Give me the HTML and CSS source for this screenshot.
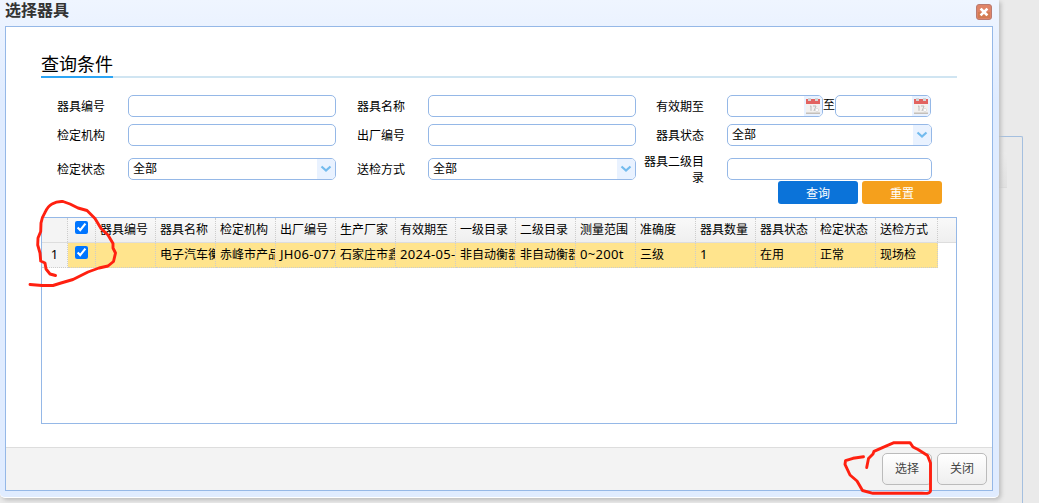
FILE: index.html
```html
<!DOCTYPE html>
<html lang="zh-CN">
<head>
  <meta charset="UTF-8" />
  <title>选择器具</title>
  <link rel="stylesheet" href="styles.css">
</head>
<body>

<div class="page-panel"><div class="page-toolbar"></div></div>

<div class="window">
  <div class="window-header">
    <span>选择器具</span>
    <svg class="close" width="16" height="16" viewBox="0 0 16 16">
      <rect x="0.5" y="0.5" width="15" height="15" rx="2.5" fill="#df8468" stroke="#b97a70"/>
      <rect x="2" y="8" width="12" height="6" fill="#d37b52"/>
      <path d="M5.500 5.500l5 5M10.500 5.500l-5 5" stroke="#fff" stroke-width="2.600" stroke-linecap="square"/>
    </svg>
  </div>

  <div class="window-body">
    <div class="content">
      <div class="section-title"><span>查询条件</span></div>

      <form class="search">
        <label>器具编号</label>
        <input type="text">
        <label>器具名称</label>
        <input type="text">
        <label>有效期至</label>
        <div class="dates">
          <div class="box date"><span class="addon"><svg width="16" height="18" viewBox="0 0 16 18"><path d="M1 2h14v14.5H1z" fill="#f3f1ef"/><path d="M1 15.500h14v1.500H1z" fill="#c4bfba"/><path d="M1 2h14v5H1z" fill="#e26360"/><path d="M3 1h3v3H3zM10 1h3v3h-3z" fill="#d5d5d5"/><path d="M5 9.500l1-.7v5M8 9h3l-2 5" fill="none" stroke="#bbb"/><circle cx="12" cy="13" r="1.600" fill="#fff" stroke="#d6d6d6" stroke-width=".7"/></svg></span></div>
          <span class="to">至</span>
          <div class="box date"><span class="addon"><svg width="16" height="18" viewBox="0 0 16 18"><path d="M1 2h14v14.5H1z" fill="#f3f1ef"/><path d="M1 15.500h14v1.500H1z" fill="#c4bfba"/><path d="M1 2h14v5H1z" fill="#e26360"/><path d="M3 1h3v3H3zM10 1h3v3h-3z" fill="#d5d5d5"/><path d="M5 9.500l1-.7v5M8 9h3l-2 5" fill="none" stroke="#bbb"/><circle cx="12" cy="13" r="1.600" fill="#fff" stroke="#d6d6d6" stroke-width=".7"/></svg></span></div>
        </div>

        <label>检定机构</label>
        <input type="text">
        <label>出厂编号</label>
        <input type="text">
        <label>器具状态</label>
        <div class="box">全部<span class="addon"><svg width="12" height="8" viewBox="0 0 12 8"><path d="M1.500 1.500L6 5.500l4.500-4" fill="none" stroke="#73bbee" stroke-width="2.200"/></svg></span></div>

        <label>检定状态</label>
        <div class="box">全部<span class="addon"><svg width="12" height="8" viewBox="0 0 12 8"><path d="M1.500 1.500L6 5.500l4.500-4" fill="none" stroke="#73bbee" stroke-width="2.200"/></svg></span></div>
        <label>送检方式</label>
        <div class="box">全部<span class="addon"><svg width="12" height="8" viewBox="0 0 12 8"><path d="M1.500 1.500L6 5.500l4.500-4" fill="none" stroke="#73bbee" stroke-width="2.200"/></svg></span></div>
        <label>器具二级目录</label>
        <input type="text">
      </form>

      <div class="actions">
        <button class="query">查询</button>
        <button class="reset">重置</button>
      </div>

      <div class="datagrid">
        <div class="row head">
          <div class="rownum"></div>
          <div class="check"><input type="checkbox" checked></div>
          <div>器具编号</div>
          <div>器具名称</div>
          <div>检定机构</div>
          <div>出厂编号</div>
          <div>生产厂家</div>
          <div>有效期至</div>
          <div>一级目录</div>
          <div>二级目录</div>
          <div>测量范围</div>
          <div>准确度</div>
          <div>器具数量</div>
          <div>器具状态</div>
          <div>检定状态</div>
          <div>送检方式</div>
        </div>
        <div class="row selected">
          <div class="rownum">1</div>
          <div class="check"><input type="checkbox" checked></div>
          <div></div>
          <div>电子汽车衡</div>
          <div>赤峰市产品</div>
          <div class="num">JH06-077</div>
          <div>石家庄市鑫</div>
          <div class="num">2024-05-</div>
          <div>非自动衡器</div>
          <div>非自动衡器</div>
          <div class="num">0~200t</div>
          <div>三级</div>
          <div class="num">1</div>
          <div>在用</div>
          <div>正常</div>
          <div>现场检</div>
        </div>
      </div>
    </div>

    <div class="footer">
      <button>选择</button>
      <button>关闭</button>
    </div>
  </div>
</div>

<svg class="marks" width="1039" height="503" viewBox="0 0 1039 503">
  <path d="M55.500 275.500L50 274L46 269L45 263L40.700 261L40 253L37.700 245L38 238L40.700 231.500L41 223Q42 217 45 212.500Q48 206 52 204Q57 201 63 201.500L70 204L78 208L87 210.500L95 218.500L101 228.500L108 235L113 243.500V248L115.500 253L113.500 261.500L108 266L99 268L88 272L73 279.500L61 283L53 285.500H42L30 284.500"/>
  <path d="M863.500 456.700L853 458.300L845.500 460.700L845 464.300L850 475L857 481L862.500 490.500L873 493.300H922Q930 494 930.500 491V463L927.500 455.500L918 449.500L913 447L910 442.700H894L883 447.300L874 451.300L873 454L868.500 458.500L866.700 467.500"/>
</svg>

</body>
</html>
```
FILE: styles.css
```css
* {
  box-sizing: border-box;
}
body {
  margin: 0;
  height: 503px;
  overflow: hidden;
  position: relative;
  background: #eaeaea;
  font-family: "Noto Sans", "Noto Sans CJK SC", sans-serif;
  font-size: 12px;
  color: #000;
}
/* page behind the dialog */
.page-panel {
  position: absolute;
  left: -2px;
  top: 136px;
  width: 1025px;
  height: 367px;
  border: 1px solid #a4bfdf;
  border-bottom: none;
  border-radius: 2px 2px 0 0;
}
.page-toolbar {
  width: 1008px;
  height: 36px;
  margin-top: 15px;
  background: linear-gradient(#ebebeb, #e2e2e2);
  border-bottom: 1px solid #dcdcdc;
}
.window {
  position: relative;
  width: 999px;
  height: 498px;
  padding: 0 6px 7px 5px;
  background: linear-gradient(#eff5ff, #e0ecff 20%);
  border-bottom: 1px solid #fff;
  border-radius: 0 0 5px 5px;
  box-shadow: 2px 2px 4px #bbb;
}
.window-header {
  display: flex;
  justify-content: space-between;
  height: 26px;
  padding: 4px 1px 0 0;
  font-size: 16px;
  font-weight: 600;
  line-height: 15px;
  color: #333;
}
.window-header span {
  margin-top: -1px;
}
.window-body {
  height: 465px;
  display: flex;
  flex-direction: column;
  border: 1px solid #95b8e7;
  background: #fff;
}
.content {
  flex: 1;
  padding: 24px 35px 0;
}
.section-title {
  height: 27px;
  border-bottom: 2px solid #d0e5f2;
  font-size: 18px;
  line-height: 26px;
}
.section-title span {
  display: inline-block;
  height: 27px;
  border-bottom: 2px solid #2ba4f4;
}
.search {
  display: grid;
  grid-template-columns: 87px 208px 92px 208px 91px 205px;
  grid-template-rows: 30px 28px 40px;
  align-items: center;
  margin-top: 13px;
}
.search label {
  padding: 2px 23px 0 0;
  text-align: right;
  line-height: 16px;
}
.search input,
.box {
  width: 100%;
  height: 22px;
  border: 1px solid #95b8e7;
  border-radius: 5px;
  background: #fff;
}
.box {
  display: flex;
  justify-content: space-between;
  align-items: center;
  padding-left: 4px;
  line-height: 20px;
  overflow: hidden;
}
.addon {
  width: 18px;
  height: 20px;
  display: flex;
  align-items: center;
  justify-content: center;
  background: #e9f2ff;
}
.dates {
  display: flex;
}
.date {
  width: 96px;
  justify-content: flex-end;
}
.to {
  width: 12px;
  line-height: 20px;
}
.actions {
  display: flex;
  justify-content: flex-end;
  gap: 4px;
  margin: -8px 15px 0 0;
}
.actions button {
  width: 80px;
  height: 23px;
  padding: 0;
  border: none;
  border-radius: 3px;
  color: #fff;
  font: inherit;
}
.query {
  background: #0b73d9;
}
.reset {
  background: #f5a01c;
}
.datagrid {
  height: 207px;
  margin-top: 13px;
  border: 1px solid #95b8e7;
}
.row {
  display: grid;
  grid-template-columns: 26px 28px repeat(13, 60px) 62px;
  height: 25px;
  line-height: 24px;
}
.row div {
  padding-left: 4px;
  border-right: 1px dotted #ccc;
  overflow: hidden;
  white-space: nowrap;
}
.head {
  background: linear-gradient(#f9f9f9, #efefef);
  border-bottom: 1px solid #ddd;
}
.selected {
  width: 896px;
  background: #ffe48d;
}
.selected div {
  border-bottom: 1px dotted #ccc;
}
.row .rownum {
  padding: 0;
  text-align: center;
  background: #f4f4f4;
}
.row .check {
  padding: 3px 0 0 7px;
}
.check input {
  display: block;
  width: 13px;
  height: 13px;
  margin: 0;
}
.row .num,
.selected .rownum {
  font-size: 13px;
  line-height: 22px;
}
.row .num {
  letter-spacing: 0.3px;
}
.footer {
  display: flex;
  justify-content: flex-end;
  gap: 5px;
  height: 43px;
  padding: 5px 5px 0 0;
  border-top: 1px solid #ddd;
  background: #f3f3f3;
}
.footer button {
  width: 50px;
  height: 32px;
  padding: 0 0 2px;
  border: 1px solid #bbb;
  border-radius: 5px;
  background: linear-gradient(#fff, #eee);
  font: inherit;
  color: #444;
}
/* hand-drawn highlights over the dialog */
.marks {
  position: absolute;
  left: 0;
  top: 0;
  pointer-events: none;
}
.marks path {
  fill: none;
  stroke: #ff2010;
  stroke-width: 2.9;
  stroke-linecap: round;
  stroke-linejoin: round;
}
```
